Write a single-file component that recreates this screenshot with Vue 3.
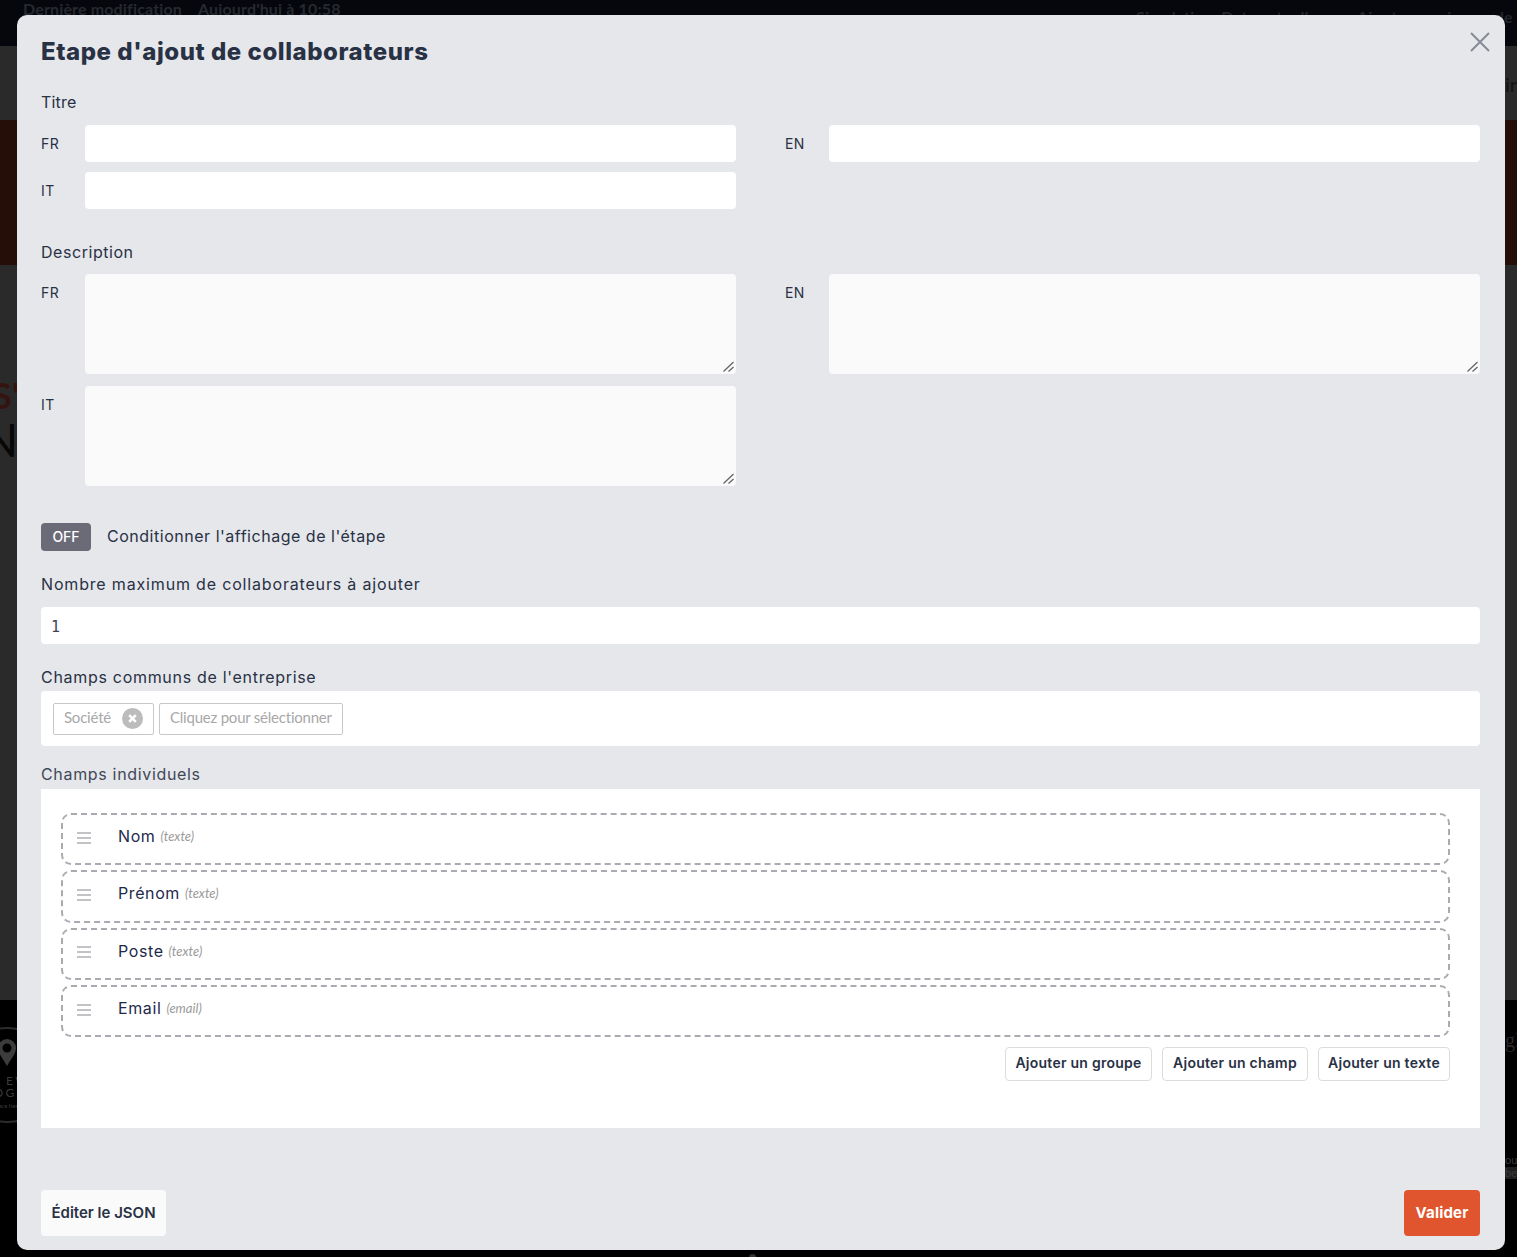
<script setup>
const rows = [
  { name: 'Nom', type: '(texte)' },
  { name: 'Prénom', type: '(texte)' },
  { name: 'Poste', type: '(texte)' },
  { name: 'Email', type: '(email)' }
]
const areas = ['FR', 'EN', 'IT']
</script>

<template>
  <div class="page">
    <header class="bg-top">
      <span class="bg-top-left">Dernière modification</span>
      <span class="bg-top-left">Aujourd'hui à 10:58</span>
      <span class="bg-top-right">Simulation: Date actuelle</span>
      <span class="bg-top-right2">Ajouter une image de</span>
    </header>
    <div class="bg-nav"><span class="bg-nav-text">ir</span></div>
    <div class="bg-hero"></div>
    <div class="bg-main">
      <div class="bg-s">S'</div>
      <div class="bg-n">N</div>
    </div>
    <footer class="bg-foot">
      <div class="bg-logo">
        <svg class="pin" viewBox="0 0 20 30" width="18" height="31">
          <path fill="#3c3c3c" fill-rule="evenodd" d="M10 0a10 10 0 0 1 10 10c0 6-6 13-10 20C6 23 0 16 0 10A10 10 0 0 1 10 0zm0 5a5 5 0 1 0 0 10a5 5 0 0 0 0-10z" />
        </svg>
        <span class="logo-a">YOUR EVENT</span>
        <span class="logo-b">LOGO</span>
        <span class="logo-c">Place here</span>
      </div>
      <span class="bg-gl">gl</span>
      <span class="bg-ou">ou</span>
      <span class="bg-ube">ube</span>
      <span class="bg-dot"></span>
    </footer>

    <div class="modal">
      <h1 class="title">Etape d'ajout de collaborateurs</h1>
      <svg class="close" viewBox="0 0 20 20" width="20" height="20">
        <path d="M1 1L19 19M19 1L1 19" stroke="#868c96" stroke-width="2" fill="none" />
      </svg>

      <div class="label first">Titre</div>
      <div class="lang-grid inputs">
        <div class="lang"><span class="code">FR</span><div class="inp"></div></div>
        <div class="lang"><span class="code">EN</span><div class="inp"></div></div>
        <div class="lang"><span class="code">IT</span><div class="inp"></div></div>
      </div>

      <div class="label desc">Description</div>
      <div class="lang-grid areas">
        <div v-for="code in areas" :key="code" class="lang top">
          <span class="code">{{ code }}</span>
          <div class="area-wrap">
            <textarea class="area"></textarea>
            <svg class="grip" viewBox="0 0 11 11" width="11" height="11">
              <path d="M0.5 10.5L10.5 1M5.5 10.5L10.5 6" stroke="#666" stroke-width="1.3" fill="none" />
            </svg>
          </div>
        </div>
      </div>

      <div class="cond">
        <span class="off">OFF</span>
        <span class="cond-text">Conditionner l'affichage de l'étape</span>
      </div>

      <div class="label max">Nombre maximum de collaborateurs à ajouter</div>
      <div class="num">1</div>

      <div class="label common">Champs communs de l'entreprise</div>
      <div class="multi">
        <span class="tag">Société
          <svg viewBox="0 0 21 21" width="21" height="21" class="tag-x">
            <circle cx="10.5" cy="10.5" r="10.5" fill="#bcbcbc" />
            <path d="M7.2 7.2l6.6 6.6M13.8 7.2l-6.6 6.6" stroke="#fff" stroke-width="2.6" />
          </svg>
        </span>
        <span class="tag ph">Cliquez pour sélectionner</span>
      </div>

      <div class="label indiv">Champs individuels</div>
      <div class="panel">
        <div class="rows">
          <div v-for="row in rows" :key="row.name" class="row">
            <svg viewBox="0 0 14 12" width="14" height="12" class="burger">
              <path d="M0 1h14M0 6h14M0 11h14" stroke="#85858f" stroke-width="1" />
            </svg>
            <span class="row-name">{{ row.name }}</span>
            <span class="row-type">{{ row.type }}</span>
          </div>
        </div>
        <div class="add-btns">
          <button class="add">Ajouter un groupe</button>
          <button class="add">Ajouter un champ</button>
          <button class="add">Ajouter un texte</button>
        </div>
      </div>

      <div class="foot">
        <button class="json">Éditer le JSON</button>
        <button class="valid">Valider</button>
      </div>
    </div>
  </div>
</template>

<style>
html, body { margin: 0; background: #000; }
</style>

<style scoped>
.page {
  position: relative;
  width: 1517px;
  height: 1257px;
  overflow: hidden;
  font-family: Inter, "Open Sans", sans-serif;
  color: #293145;
}
.bg-top {
  height: 46px;
  background: #05070d;
  display: flex;
  gap: 16px;
  padding-left: 23px;
  font-family: Lato, sans-serif;
  font-size: 16px;
  font-weight: 700;
  line-height: 18px;
  letter-spacing: 0.15px;
  color: #262a30;
  position: relative;
}
.bg-top-right, .bg-top-right2 {
  position: absolute;
  top: 8px;
  color: #22252b;
  white-space: nowrap;
}
.bg-top-right { left: 1136px; }
.bg-top-right2 { left: 1357px; letter-spacing: 0.2px; }
.bg-nav {
  height: 74px;
  background: #2a2a2a;
  position: relative;
}
.bg-nav-text {
  position: absolute;
  right: 0;
  top: 26px;
  font-family: Lato, sans-serif;
  font-size: 20px;
  color: #141414;
}
.bg-hero { height: 145px; background: #250e07; }
.bg-main {
  height: 735px;
  background: #2a2a2a;
  position: relative;
  font-family: Lato, sans-serif;
  font-weight: 700;
}
.bg-s {
  position: absolute;
  left: -8px;
  top: 108px;
  font-size: 36px;
  color: #35140f;
}
.bg-n {
  position: absolute;
  left: -17px;
  top: 147px;
  font-size: 46px;
  font-weight: 400;
  color: #070707;
}
.bg-foot {
  height: 257px;
  background: #000;
  position: relative;
  font-family: "Liberation Serif", serif;
  color: #2e2e2e;
}
.bg-logo {
  position: absolute;
  left: -41px;
  top: 27px;
  width: 96px;
  height: 96px;
  box-sizing: border-box;
  border: 2px solid #2c2c2c;
  border-radius: 50%;
  display: flex;
  flex-direction: column;
  align-items: center;
  font-family: Lato, sans-serif;
  color: #3b3b3b;
  white-space: nowrap;
}
.pin { margin-top: 8px; flex: none; }
.logo-a { margin-top: 7px; font-size: 12px; line-height: 12px; letter-spacing: 2.5px; }
.logo-b { font-size: 12px; line-height: 11px; letter-spacing: 2.5px; }
.logo-c { margin-top: 4px; font-size: 6px; line-height: 8px; }
.bg-gl { position: absolute; left: 1505px; top: 29px; font-size: 20px; line-height: 22px; color: #2a2a2a; }
.bg-ou { position: absolute; left: 1505px; top: 154px; font-size: 11px; line-height: 12px; color: #3a3a3a; font-family: Lato, sans-serif; }
.bg-ube { position: absolute; right: 0; top: 167px; width: 12px; overflow: hidden; direction: rtl; font-size: 11px; line-height: 12px; color: #3a3a3a; background: #1f1f1f; font-family: Lato, sans-serif; }
.bg-dot { position: absolute; left: 749px; top: 254px; width: 7px; height: 7px; border-radius: 50%; background: #333; }

.modal {
  position: absolute;
  left: 17px;
  top: 15px;
  width: 1488px;
  height: 1235px;
  box-sizing: border-box;
  padding: 0 25px 14px 24px;
  display: flex;
  flex-direction: column;
  background: #e5e7eb;
  border-radius: 10px;
}
.title {
  margin: 0;
  padding-top: 21px;
  font-size: 24px;
  line-height: 32px;
  font-weight: 800;
  color: #293145;
  letter-spacing: 0.55px;
}
.close { position: absolute; right: 15px; top: 17px; }
.label { font-size: 16px; line-height: 22px; color: #293145; }
.first { margin-top: 23px; letter-spacing: 0.2px; }
.desc { margin-top: 32px; letter-spacing: 0.55px; }
.max { letter-spacing: 0.83px; }
.lang-grid {
  display: grid;
  grid-template-columns: 695px 695px;
  column-gap: 49px;
}
.inputs { margin-top: 12px; row-gap: 10px; }
.areas { margin-top: 11px; row-gap: 12px; }
.lang { display: flex; align-items: center; }
.lang.top { align-items: flex-start; }
.code {
  width: 44px;
  flex: none;
  font-size: 14px;
  line-height: 20px;
  letter-spacing: 0.4px;
  color: #293145;
}
.lang.top .code { padding-top: 9px; }
.inp {
  flex: 1;
  height: 37px;
  background: #fff;
  border-radius: 4px;
}
.area-wrap { flex: 1; position: relative; }
.area {
  display: block;
  width: 100%;
  height: 100px;
  box-sizing: border-box;
  border: 0;
  outline: 0;
  padding: 8px;
  background: #fafafa;
  border-radius: 4px;
  resize: none;
}
.grip { position: absolute; right: 2px; bottom: 2px; }
.cond {
  display: flex;
  align-items: center;
  gap: 16px;
  margin-top: 37px;
  margin-bottom: 22px;
  height: 28px;
}
.off {
  width: 50px;
  height: 28px;
  background: #6b6b78;
  border-radius: 4px;
  color: #fff;
  font-size: 14px;
  font-weight: 500;
  line-height: 27px;
  text-align: center;
}
.cond-text { font-size: 16px; line-height: 22px; letter-spacing: 0.52px; padding-bottom: 2px; }
.num {
  margin-top: 12px;
  height: 37px;
  box-sizing: border-box;
  padding: 2px 0 0 10px;
  line-height: 37px;
  background: #fff;
  border-radius: 4px;
  font-family: "DejaVu Sans Mono", monospace;
  font-size: 15px;
  color: #3c4454;
}
.common { margin-top: 22px; letter-spacing: 0.7px; }
.multi {
  margin-top: 3px;
  height: 55px;
  box-sizing: border-box;
  padding: 12px;
  display: flex;
  gap: 5px;
  background: #fff;
  border-radius: 4px;
}
.tag {
  display: inline-flex;
  align-items: center;
  height: 32px;
  box-sizing: border-box;
  padding: 0 10px 4px;
  border: 1px solid #c8c8c8;
  border-radius: 2px;
  font-family: Lato, sans-serif;
  font-size: 15px;
  letter-spacing: -0.22px;
  color: #a8a8a8;
}
.tag-x { margin: 2px 0 0 11px; }
.indiv { margin-top: 17px; color: #414858; letter-spacing: 0.67px; }
.panel {
  margin-top: 4px;
  height: 339px;
  box-sizing: border-box;
  padding: 24px 30px 0 20px;
  background: #fff;
}
.rows { display: flex; flex-direction: column; gap: 5px; }
.row {
  height: 52.3px;
  box-sizing: border-box;
  border: 2px dashed #aaaab0;
  border-radius: 10px;
  display: flex;
  align-items: center;
  padding-left: 14px;
  padding-bottom: 6px;
}
.burger { flex: none; margin-top: 3px; }
.row-name { margin-left: 27px; font-size: 16px; line-height: 22px; letter-spacing: 0.6px; color: #1e2a4a; }
.row-type {
  margin-left: 5px;
  font-family: Lato, sans-serif;
  font-style: italic;
  font-size: 13px;
  color: #9a9a9a;
}
.add-btns {
  display: flex;
  justify-content: flex-end;
  gap: 10px;
  margin-top: 10px;
}
.add {
  height: 34px;
  padding: 0 0 3px;
  background: #fff;
  border: 1px solid #dcdcdc;
  border-radius: 4px;
  font-family: Inter, sans-serif;
  font-size: 14px;
  font-weight: 600;
  letter-spacing: 0.25px;
  color: #293145;
}
.add:nth-child(1) { width: 147px; }
.add:nth-child(2) { width: 146px; }
.add:nth-child(3) { width: 132px; }
.foot {
  margin-top: auto;
  display: flex;
  justify-content: space-between;
}
.json, .valid {
  height: 46px;
  padding: 0 0 2px;
  border: 0;
  border-radius: 4px;
  font-family: Inter, sans-serif;
  font-size: 15px;
  font-weight: 600;
}
.json { width: 125px; background: #fafafa; color: #293145; }
.valid { width: 76px; background: #e0552e; color: #fff; font-weight: 700; letter-spacing: 0.2px; }
</style>
